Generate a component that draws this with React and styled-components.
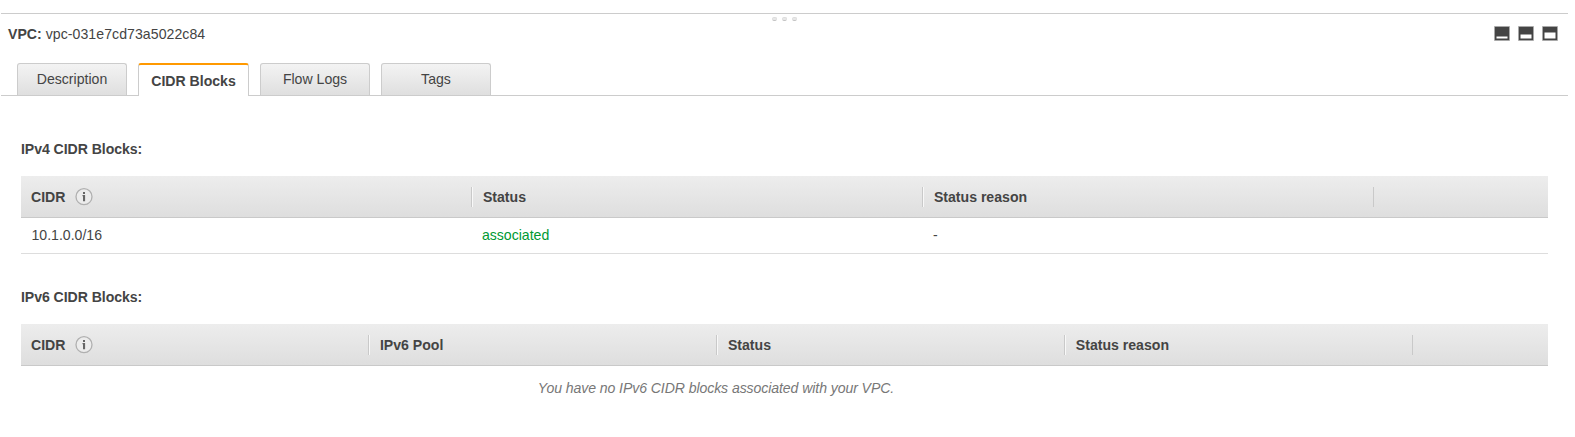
import React from "react";
import styled, { createGlobalStyle, css } from "styled-components";

const GlobalStyle = createGlobalStyle`
  * { box-sizing: border-box; }
  body {
    margin: 0;
    background: #fff;
    color: #444;
    font-family: "Liberation Sans", Arial, sans-serif;
    font-size: 14.1px;
    line-height: 18px;
  }
`;

const Panel = styled.main`
  margin: 13px 7px 0 1px;
  height: 424px;
  border-top: 1px solid #ccc;
`;

const Grip = styled.div`
  display: flex;
  justify-content: center;
  gap: 5px;
  height: 11px;
  padding: 3px 1px 0 0;
`;

const GripDot = styled.span`
  width: 5px;
  height: 4px;
  border: 1px solid #ddd;
  border-bottom-color: #c4c4c4;
  border-radius: 2px;
  background: #e8e8e8;
`;

const TitleBar = styled.header`
  display: flex;
  justify-content: space-between;
  height: 38px;
  padding: 0 10px 0 7px;
`;

const Title = styled.div`
  display: flex;
  gap: 4px;
  white-space: nowrap;
`;

const ResourceId = styled.span`
  letter-spacing: 0.06px;
`;

const LayoutControls = styled.div`
  display: flex;
  gap: 8px;
  padding-top: 1px;
`;

const ControlIcon = styled.svg`
  display: block;
  width: 16px;
  height: 16px;
`;

const TabList = styled.nav`
  display: flex;
  gap: 11px;
  height: 33px;
  padding-left: 16px;
  border-bottom: 1px solid #ccc;
`;

const Tab = styled.button`
  width: 110px;
  height: 32px;
  padding: 0 0 1px;
  border: 1px solid #ccc;
  border-bottom: 0;
  border-radius: 3px 3px 0 0;
  background: linear-gradient(#f3f3f3, #dfdfdf);
  color: #444;
  font: inherit;
  ${({ $active }) =>
    $active &&
    css`
      width: 111px;
      height: 33px;
      padding: 1px 0 0;
      border-top: 2px solid #f90;
      background: #fff;
      font-weight: bold;
    `}
`;

const Content = styled.div`
  padding: 44px 20px 0;
`;

const Section = styled.section`
  margin-bottom: 34px;
`;

const Heading = styled.h2`
  margin: 0 0 18px;
  font-size: inherit;
  line-height: 18px;
  letter-spacing: -0.06px;
`;

const Row = styled.div`
  display: grid;
  grid-template-columns: ${({ $columns }) => $columns};
  align-items: center;
`;

const HeaderRow = styled(Row)`
  height: 42px;
  border-bottom: 1px solid #c9c9c9;
  background: linear-gradient(#ededed, #dedede);
  font-weight: bold;
`;

const HeaderCell = styled.div`
  display: flex;
  align-items: center;
  gap: 10px;
  height: 20px;
  padding-left: 10px;
  white-space: nowrap;
  & + & {
    padding-left: 10.5px;
    border-left: 1px solid #c9c9c9;
    box-shadow: inset 1px 0 #f8f8f8;
  }
  & + &:empty {
    box-shadow: none;
  }
`;

const BodyRow = styled(Row)`
  height: 36px;
  padding-bottom: 1px;
  border-bottom: 1px solid #ddd;
`;

const Cell = styled.div`
  padding-left: 10.5px;
  color: ${({ $status }) => ($status ? "#093" : "inherit")};
`;

const EmptyMessage = styled.p`
  margin: 13px 0 0;
  padding-right: 137px;
  color: #777;
  font-style: italic;
  letter-spacing: -0.09px;
  text-align: center;
`;

const InfoMark = styled.svg`
  width: 18px;
  height: 18px;
`;

function InfoIcon() {
  return (
    <InfoMark viewBox="0 0 18 18">
      <circle cx="9" cy="8.7" r="8" fill="#ececec" stroke="#b0b0b0" strokeWidth="1.3" />
      <path d="M8 4h2v2H8zM7.5 7h2.6v6.2H8V8.2h-.5z" fill="#666" />
    </InfoMark>
  );
}

function LayoutIcon({ top, height }) {
  return (
    <ControlIcon viewBox="0 0 16 16">
      <path d="M.5.5h15v14H.5z" fill="#444" stroke="#aaa" strokeWidth=".7" />
      <rect x="2.5" y={top} width="11" height={height} fill="#fff" />
    </ControlIcon>
  );
}

const ipv4Columns = "450.4px 451px 450.6px 1fr";
const ipv6Columns = "347.4px 348px 347.9px 348px 1fr";
const tabs = ["Description", "CIDR Blocks", "Flow Logs", "Tags"];

export default function App() {
  return (
    <>
      <GlobalStyle />
      <Panel>
        <Grip>
          <GripDot />
          <GripDot />
          <GripDot />
        </Grip>
        <TitleBar>
          <Title>
            <strong>VPC:</strong>
            <ResourceId>vpc-031e7cd73a5022c84</ResourceId>
          </Title>
          <LayoutControls>
            <LayoutIcon top={10.5} height={2} />
            <LayoutIcon top={8.5} height={4} />
            <LayoutIcon top={6.5} height={6} />
          </LayoutControls>
        </TitleBar>
        <TabList>
          {tabs.map((label) => (
            <Tab key={label} $active={label === "CIDR Blocks"}>
              {label}
            </Tab>
          ))}
        </TabList>
        <Content>
          <Section>
            <Heading>IPv4 CIDR Blocks:</Heading>
            <HeaderRow $columns={ipv4Columns}>
              <HeaderCell>CIDR <InfoIcon /></HeaderCell>
              <HeaderCell>Status</HeaderCell>
              <HeaderCell>Status reason</HeaderCell>
              <HeaderCell />
            </HeaderRow>
            <BodyRow $columns={ipv4Columns}>
              <Cell>10.1.0.0/16</Cell>
              <Cell $status>associated</Cell>
              <Cell>-</Cell>
            </BodyRow>
          </Section>
          <Section>
            <Heading>IPv6 CIDR Blocks:</Heading>
            <HeaderRow $columns={ipv6Columns}>
              <HeaderCell>CIDR <InfoIcon /></HeaderCell>
              <HeaderCell>IPv6 Pool</HeaderCell>
              <HeaderCell>Status</HeaderCell>
              <HeaderCell>Status reason</HeaderCell>
              <HeaderCell />
            </HeaderRow>
            <EmptyMessage>You have no IPv6 CIDR blocks associated with your VPC.</EmptyMessage>
          </Section>
        </Content>
      </Panel>
    </>
  );
}
